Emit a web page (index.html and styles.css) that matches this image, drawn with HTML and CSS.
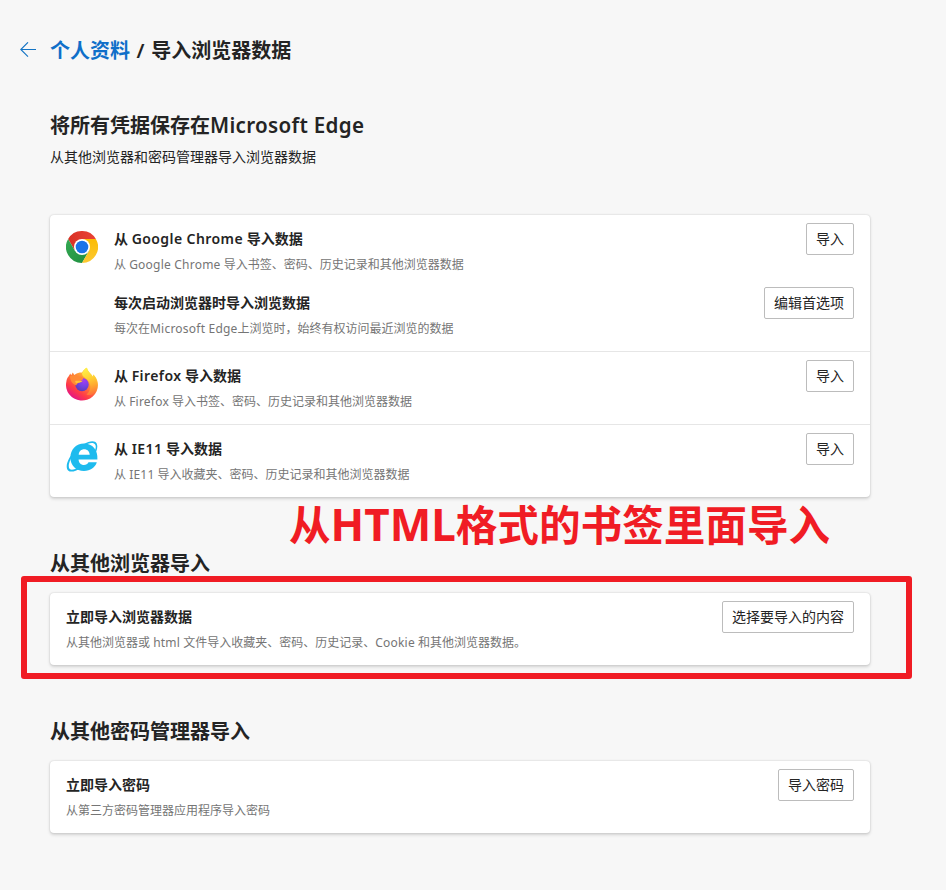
FILE: index.html
```html
<!DOCTYPE html>
<html lang="zh-CN">
<head>
<meta charset="utf-8">
<title>导入浏览器数据</title>
<link rel="stylesheet" href="styles.css">
</head>
<body>
<main class="page">
  <header class="crumbs">
    <svg class="back" width="16" height="16" viewBox="0 0 16 16" fill="none" stroke="#1474c4" stroke-width="1.1"><path d="M16 7.5H.8M8 .3 .8 7.5 8 14.7"/></svg>
    <h1><a class="link">个人资料</a> / 导入浏览器数据</h1>
  </header>

  <section class="intro">
    <h2>将所有凭据保存在<span class="en">Microsoft Edge</span></h2>
    <p>从其他浏览器和密码管理器导入浏览器数据</p>
  </section>

  <div class="card">
    <div class="row first">
      <svg class="icon" width="32" height="32" viewBox="0 0 32 32">
        <defs>
          <linearGradient id="cr" x1="0" y1="0" x2="1" y2="0"><stop offset="0" stop-color="#d93025"/><stop offset="1" stop-color="#ea4335"/></linearGradient>
          <linearGradient id="cg" x1="1" y1="1" x2="0" y2="0"><stop offset="0" stop-color="#1e8e3e"/><stop offset="1" stop-color="#34a853"/></linearGradient>
          <linearGradient id="cy" x1="0" y1="1" x2="0" y2="0"><stop offset="0" stop-color="#fcc934"/><stop offset="1" stop-color="#fbbc04"/></linearGradient>
        </defs>
        <path fill="url(#cr)" d="M16 16 9.07 20 2.14 8A16 16 0 0 1 29.86 8H16Z"/>
        <path fill="url(#cg)" d="M16 16 22.93 20 16 32A16 16 0 0 1 2.14 8L9.07 20Z"/>
        <path fill="url(#cy)" d="M16 16V8H29.86A16 16 0 0 1 16 32L22.93 20Z"/>
        <circle cx="16" cy="16" r="8" fill="#fff"/><circle cx="16" cy="16" r="6.3" fill="#1a73e8"/>
      </svg>
      <div class="text"><h3>从 <span class="en">Google Chrome</span> 导入数据</h3><p>从 <span class="en">Google Chrome</span> 导入书签、密码、历史记录和其他浏览器数据</p></div>
      <button>导入</button>
    </div>
    <div class="row indent">
      <div class="text"><h3>每次启动浏览器时导入浏览数据</h3><p>每次在<span class="en">Microsoft Edge</span>上浏览时，始终有权访问最近浏览的数据</p></div>
      <button>编辑首选项</button>
    </div>
    <div class="row line">
      <svg class="icon firefox" width="32" height="34" viewBox="0 0 32 34">
        <defs>
          <linearGradient id="fb" x1=".85" y1=".1" x2=".25" y2=".95"><stop offset="0" stop-color="#fff44f"/><stop offset=".28" stop-color="#ffa436"/><stop offset=".5" stop-color="#ff7139"/><stop offset=".75" stop-color="#ff3b47"/><stop offset="1" stop-color="#e31587"/></linearGradient>
          <radialGradient id="fp" cx=".65" cy=".2" r=".85"><stop offset="0" stop-color="#a53bf0"/><stop offset=".5" stop-color="#7542e5"/><stop offset="1" stop-color="#5a3cb5"/></radialGradient>
          <linearGradient id="fy" x1=".4" y1="0" x2=".6" y2="1"><stop offset="0" stop-color="#fff04a"/><stop offset=".4" stop-color="#ffcf32"/><stop offset=".7" stop-color="#ffa52f"/><stop offset="1" stop-color="#ff7139"/></linearGradient>
        </defs>
        <path fill="url(#fb)" d="M2.5 9.5 4.3 6.5 5.2 8.3 6.8 5.6 8.3 7.9C11 5.8 14.5 5.3 16 5.5 18 2 20.5 .5 21 1 22 5 25 6 27.2 10V7.5C31 11 32 15 32 18A16 15.6 0 1 1 .3 15C.6 12.4 1.3 10.7 2.5 9.5Z"/>
        <path fill="url(#fy)" d="M16 6.5C18 2 20.5 .3 21 1 22 5 24.5 6.3 27.2 10.5V7.5C32 12 32.5 20 29 25 27 28 24 28.8 20.5 27.5 26 23 25 16 21 12.5 18 10 16 9 16 6.5Z"/>
        <circle cx="16" cy="17.6" r="6.7" fill="url(#fp)"/>
        <path fill="#ff8b35" d="M4 9.3C7.5 7.7 10.5 8 12 10 15 9.5 17 10 17.2 11.5 17 13.2 14.6 13.6 13.8 14.5 13 16.4 10.6 16.1 10.4 18.2 8 18 4 15 4 9.3Z"/>
        <path fill="#ffc338" d="M9 13.9C12 13.2 15 14.4 17 13.6 15 16.2 12 15.7 10 16.6Z"/>
      </svg>
      <div class="text"><h3>从 <span class="en">Firefox</span> 导入数据</h3><p>从 <span class="en">Firefox</span> 导入书签、密码、历史记录和其他浏览器数据</p></div>
      <button>导入</button>
    </div>
    <div class="row line">
      <svg class="icon" width="32" height="32" viewBox="0 0 32 32" fill="#1ebbee">
        <path fill-rule="evenodd" d="M31.4 18.5H12.6C12.7 21.8 15 24 18 24 20 24 21.6 23.2 22.5 21.3H30.8C29.2 26.6 24.4 30 18 30 10.2 30 4.4 24.4 4.4 16.4 4.4 8.4 10.2 2.4 18 2.4 26.7 2.4 32 8.8 31.4 18.5ZM12.7 13.7H23.7C23.5 10.3 21.3 8.2 18.2 8.2 15.1 8.2 12.9 10.3 12.7 13.7Z"/>
        <path d="M28.9 9.8C30.3 6.2 30.1 3.4 27.9 2.4 23.5 .6 15.2 5.4 9.2 11.7 3.6 17.7 1.3 25.7 3.7 28 5.5 29.7 9.5 28.2 13 25.9L14.3 27.5C9.3 30.6 4.4 31.6 2.1 29.4-1.3 25.8 1.9 17.4 8.1 10.4 14.9 3.3 24.7-1.5 29 .7 31.5 2 32 5.8 30.3 10.4Z"/>
      </svg>
      <div class="text"><h3>从 <span class="en">IE11</span> 导入数据</h3><p>从 <span class="en">IE11</span> 导入收藏夹、密码、历史记录和其他浏览器数据</p></div>
      <button>导入</button>
    </div>
  </div>

  <section class="other">
    <h2>从其他浏览器导入</h2>
    <div class="note">从<span class="en">HTML</span>格式的书签里面导入</div>
    <div class="card">
      <div class="frame"></div>
      <div class="row">
        <div class="text"><h3>立即导入浏览器数据</h3><p>从其他浏览器或 <span class="en">html</span> 文件导入收藏夹、密码、历史记录、<span class="en">Cookie</span> 和其他浏览器数据。</p></div>
        <button>选择要导入的内容</button>
      </div>
    </div>
  </section>

  <section class="other passwords">
    <h2>从其他密码管理器导入</h2>
    <div class="card">
      <div class="row">
        <div class="text"><h3>立即导入密码</h3><p>从第三方密码管理器应用程序导入密码</p></div>
        <button>导入密码</button>
      </div>
    </div>
  </section>
</main>
</body>
</html>
```
FILE: styles.css
```css
* { box-sizing: border-box; }
body {
  margin: 0;
  min-height: 890px;
  background: #f7f7f7;
  color: #242424;
  font-family: "Noto Sans", "Noto Sans CJK SC", sans-serif;
  overflow: hidden;
}
h1, h2, h3, p { margin: 0; white-space: nowrap; }
.page { width: 820px; margin-left: 50px; padding-top: 37px; }

.crumbs { display: flex; align-items: center; gap: 14px; height: 28px; margin-left: -30px; }
.back { margin-bottom: 2px; }
h1, h2 { font-size: 20px; line-height: 28px; font-weight: 600; }
h1 { word-spacing: 1.4px; }
h2 .en { font-size: 20.6px; line-height: 1; letter-spacing: .3px; }
.link { color: #0f6fc9; }

.intro { margin-top: 47px; height: 103px; }
.intro p { margin-top: 7px; font-size: 14px; line-height: 20px; }

.card {
  position: relative;
  background: #fff;
  border-radius: 4px;
  box-shadow: 0 0 2px rgba(0, 0, 0, .14), 0 1.6px 3.2px rgba(0, 0, 0, .15);
}
.row { display: flex; align-items: flex-start; height: 72px; padding: 8px 16px 0; }
.row.first { height: 64px; }
.row.indent { padding-left: 64px; }
.row.line { height: 73px; border-top: 1px solid #e6e6e6; }
.icon { flex: none; margin: 8px 16px 0 0; }
.icon.firefox { margin-top: 7px; }
.text { flex: 1; padding-top: 6px; }
h3 { font-size: 14px; line-height: 20px; font-weight: 600; }
h3 .en { letter-spacing: .42px; }
.text p { margin-top: 8px; font-size: 12px; line-height: 16px; color: #757575; }
.text p .en { letter-spacing: .22px; }
.other .text p .en { letter-spacing: .22px; }
button {
  height: 32px;
  padding: 0 9px;
  border: 1px solid #bcbcbc;
  border-radius: 2px;
  background: #fff;
  color: #242424;
  font: 14px/20px "Noto Sans", "Noto Sans CJK SC", sans-serif;
}

.other { position: relative; margin-top: 53px; }
.other h2 { margin-bottom: 15px; }
.frame {
  position: absolute;
  left: -29px;
  top: -17px;
  width: 891px;
  height: 103px;
  border: 6px solid #f01c24;
  border-radius: 3px;
}
.note {
  position: absolute;
  left: 239px;
  top: -55px;
  font-size: 41.6px;
  line-height: 60px;
  font-weight: 700;
  color: #f01c24;
  white-space: nowrap;
}
.note .en { font-size: 44px; line-height: 1; }
```
